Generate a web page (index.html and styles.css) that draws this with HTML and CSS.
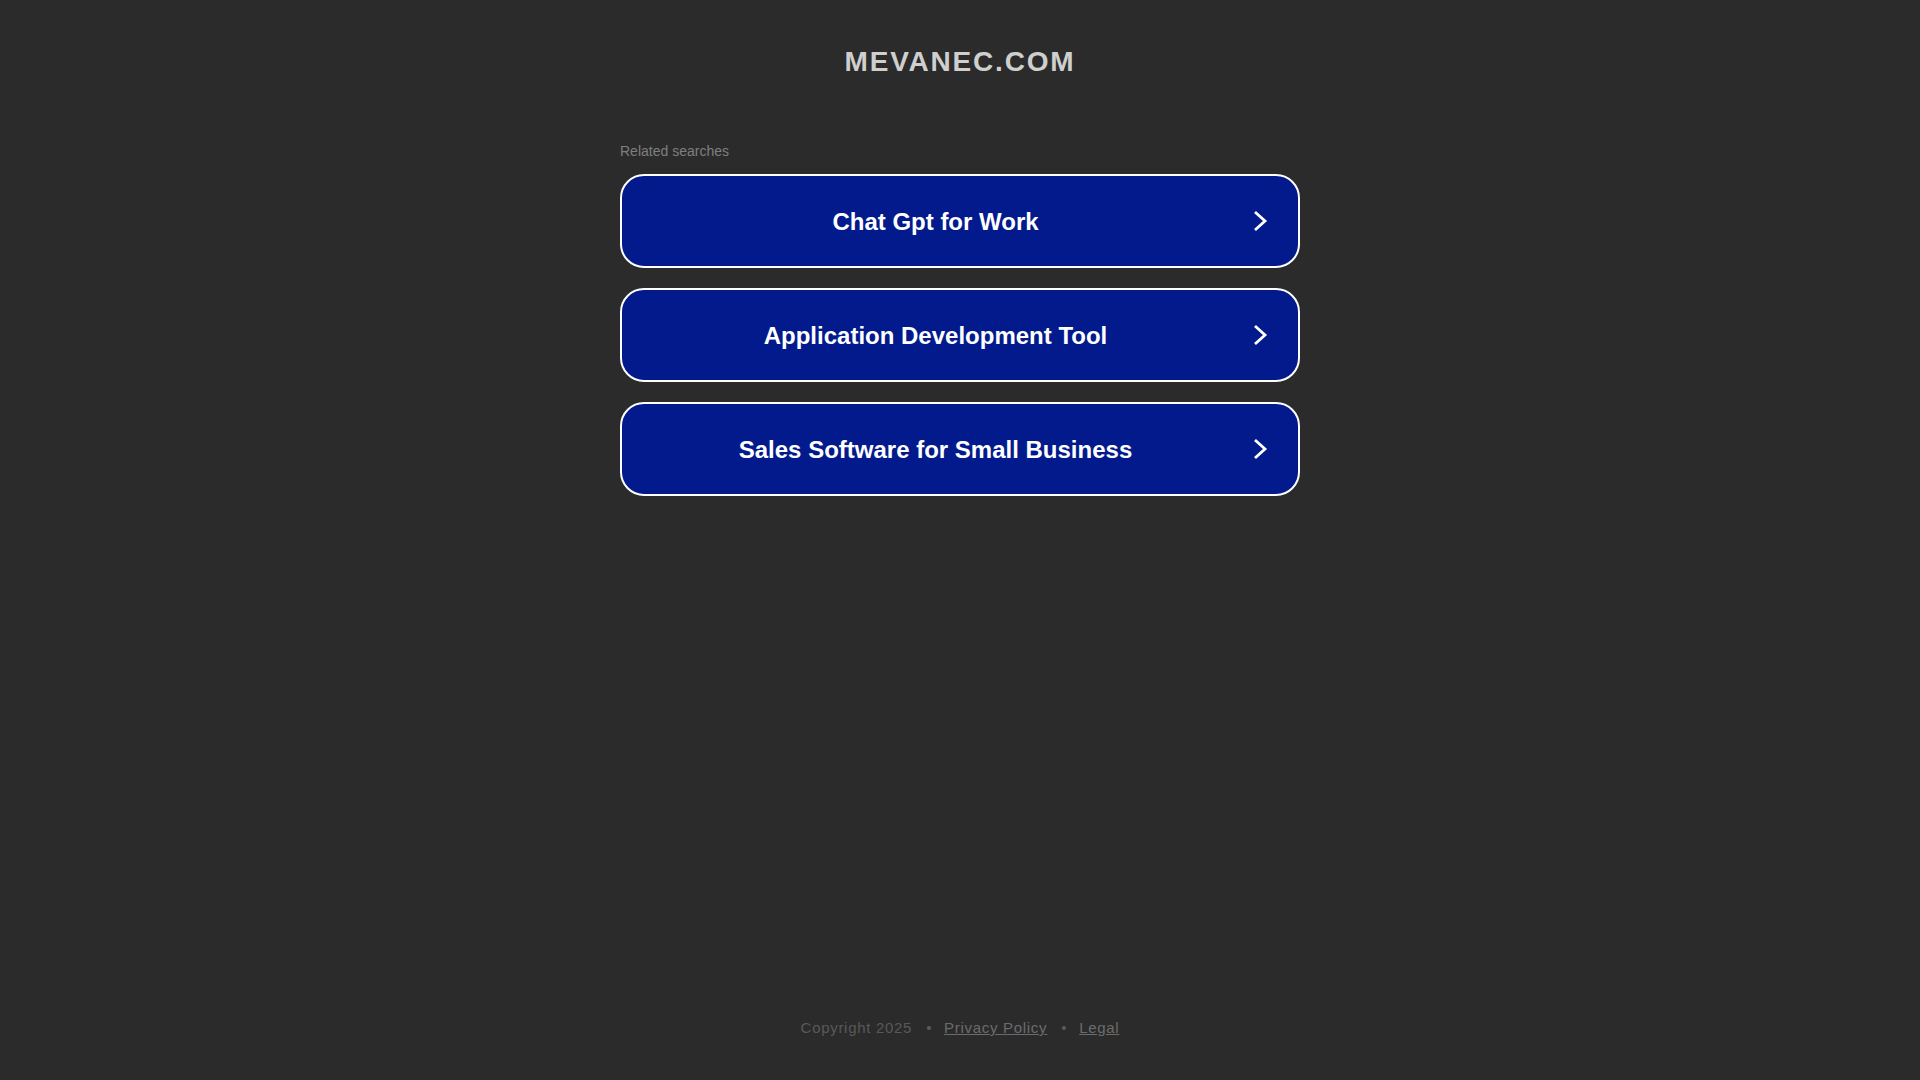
FILE: index.html
```html
<!DOCTYPE html>
<html lang="en">
<head>
<meta charset="utf-8">
<title>mevanec.com</title>
<link rel="stylesheet" href="styles.css">
</head>
<body>
<div class="page">
  <header class="header">
    <h1 class="domain">MEVANEC.COM</h1>
  </header>
  <main class="content">
    <div class="related">Related searches</div>
    <div class="links">
      <a class="link" href="#">
        <span class="label">Chat Gpt for Work</span>
        <svg class="chev" width="16" height="22" viewBox="0 0 16 22"><polyline points="3,2 13,11 3,20" fill="none" stroke="#fff" stroke-width="2.8"/></svg>
      </a>
      <a class="link" href="#">
        <span class="label">Application Development Tool</span>
        <svg class="chev" width="16" height="22" viewBox="0 0 16 22"><polyline points="3,2 13,11 3,20" fill="none" stroke="#fff" stroke-width="2.8"/></svg>
      </a>
      <a class="link" href="#">
        <span class="label">Sales Software for Small Business</span>
        <svg class="chev" width="16" height="22" viewBox="0 0 16 22"><polyline points="3,2 13,11 3,20" fill="none" stroke="#fff" stroke-width="2.8"/></svg>
      </a>
    </div>
  </main>
  <footer class="footer">
    <span class="copy">Copyright 2025</span>
    <span class="dot">•</span>
    <a class="flink" href="#">Privacy Policy</a>
    <span class="dot">•</span>
    <a class="flink" href="#">Legal</a>
  </footer>
</div>
</body>
</html>
```
FILE: styles.css
```css
html, body {
  margin: 0;
  padding: 0;
  background: #2b2b2b;
}
body {
  font-family: "Liberation Sans", Arial, sans-serif;
}
.page {
  min-height: 100vh;
  display: flex;
  flex-direction: column;
  box-sizing: border-box;
}
.header {
  padding-top: 46px;
  text-align: center;
}
.domain {
  margin: 0;
  font-size: 28px;
  line-height: 32px;
  font-weight: bold;
  letter-spacing: 1.8px;
  color: #cfcfcf;
}
.content {
  width: 680px;
  margin: 65px auto 0;
}
.related {
  font-size: 14px;
  line-height: 16px;
  color: #7f7f7f;
}
.links {
  margin-top: 15px;
  display: flex;
  flex-direction: column;
  gap: 20px;
}
.link {
  display: flex;
  align-items: center;
  height: 94px;
  box-sizing: border-box;
  border: 2px solid #fff;
  border-radius: 24px;
  background: #021a8b;
  padding: 0 30px 0 0;
  text-decoration: none;
  color: #fff;
}
.label {
  flex: 1;
  text-align: center;
  font-size: 24px;
  font-weight: bold;
  color: #fff;
  padding-top: 2px;
}
.chev {
  flex: none;
  margin-left: 3px;
}
.footer {
  margin-top: auto;
  padding-bottom: 44px;
  display: flex;
  justify-content: center;
  font-size: 15px;
  line-height: 17px;
  letter-spacing: 0.7px;
}
.copy {
  color: #595959;
}
.dot {
  color: #595959;
  margin: 0 12px 0 14px;
}
.flink {
  color: #6b6b6b;
  text-decoration: underline;
}
```
